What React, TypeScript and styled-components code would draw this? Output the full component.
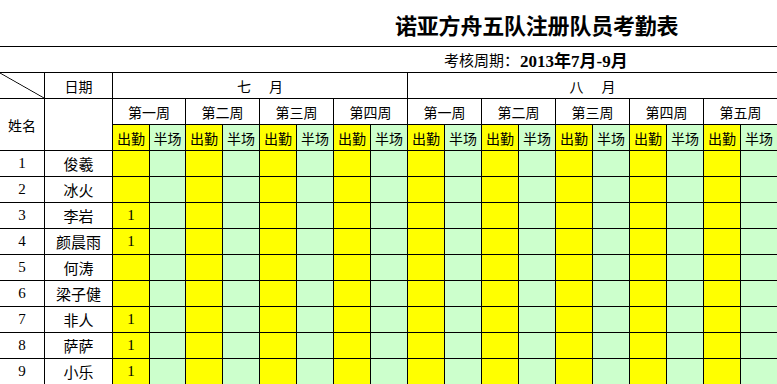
import React from 'react';
import styled, { createGlobalStyle } from 'styled-components';

const GlobalStyle = createGlobalStyle`
  html, body {
    margin: 0;
    padding: 0;
    background: #ffffff;
    overflow: hidden;
  }
  body {
    font-family: 'Noto Sans CJK SC', 'Liberation Sans', sans-serif;
    color: #000000;
  }
`;

type Member = { no: number, name: string, july1: string };

const members: Member[] = [
  { no: 1, name: '俊羲', july1: '' },
  { no: 2, name: '冰火', july1: '' },
  { no: 3, name: '李岩', july1: '1' },
  { no: 4, name: '颜晨雨', july1: '1' },
  { no: 5, name: '何涛', july1: '' },
  { no: 6, name: '梁子健', july1: '' },
  { no: 7, name: '非人', july1: '1' },
  { no: 8, name: '萨萨', july1: '1' },
  { no: 9, name: '小乐', july1: '1' },
];

const julyWeeks = ['第一周', '第二周', '第三周', '第四周'];
const augustWeeks = ['第一周', '第二周', '第三周', '第四周', '第五周'];
const allWeeks = [...julyWeeks, ...augustWeeks];

export default function App() {
  return (
    <Sheet>
      <GlobalStyle />
      <TitleRow>
        <Title>诺亚方舟五队注册队员考勤表</Title>
      </TitleRow>
      <PeriodRow>
        <PeriodLabel>考核周期：</PeriodLabel>
        <PeriodValue>2013年7月-9月</PeriodValue>
      </PeriodRow>
      <Table>
        <DiagonalCell />
        <Cell>日期</Cell>
        <Cell span={8}>
          <MonthLabel><span>七</span><span>月</span></MonthLabel>
        </Cell>
        <Cell span={10}>
          <MonthLabel><span>八</span><span>月</span></MonthLabel>
        </Cell>

        <Cell rows={2}>姓名</Cell>
        <Cell rows={2} />
        {allWeeks.map((w, i) => (
          <Cell key={'w' + i} span={2}>{w}</Cell>
        ))}
        {allWeeks.map((w, i) => (
          <React.Fragment key={'h' + i}>
            <Cell tone="yellow">出勤</Cell>
            <Cell tone="green">半场</Cell>
          </React.Fragment>
        ))}

        {members.map((m) => (
          <React.Fragment key={m.no}>
            <NumberCell>{m.no}</NumberCell>
            <NameCell>{m.name}</NameCell>
            {allWeeks.map((w, i) => (
              <React.Fragment key={i}>
                <NumberCell tone="yellow">{i === 0 ? m.july1 : ''}</NumberCell>
                <Cell tone="green" />
              </React.Fragment>
            ))}
          </React.Fragment>
        ))}
      </Table>
    </Sheet>
  );
}

const Sheet = styled.div`
  width: 778px;
  height: 384px;
  overflow: hidden;
`;

const TitleRow = styled.div`
  box-sizing: border-box;
  height: 47px;
  border-bottom: 1px solid #000000;
  display: flex;
  align-items: center;
  padding-left: 395px;
  padding-top: 2px;
`;

const Title = styled.div`
  font-size: 22px;
  font-weight: 700;
  line-height: 1;
  letter-spacing: -0.2px;
  white-space: nowrap;
`;

const PeriodRow = styled.div`
  box-sizing: border-box;
  height: 26px;
  border-bottom: 1px solid #000000;
  display: flex;
  align-items: center;
  padding-left: 444px;
  white-space: nowrap;
`;

const PeriodLabel = styled.span`
  font-size: 15px;
`;

const PeriodValue = styled.span`
  font-family: 'Liberation Serif', 'Noto Sans CJK SC', serif;
  font-size: 17px;
  font-weight: 700;
  margin-left: 1px;
`;

const Table = styled.div`
  display: grid;
  grid-template-columns: 45px 68px 37px 36px repeat(16, 37px);
  grid-auto-rows: 26px;
`;

const toneColor = (tone?: 'yellow' | 'green') =>
  tone === 'yellow' ? '#ffff00' : tone === 'green' ? '#ccffcc' : '#ffffff';

const Cell = styled.div<{ span?: number, rows?: number, tone?: 'yellow' | 'green' }>`
  box-sizing: border-box;
  grid-column: span ${(p) => p.span || 1};
  grid-row: span ${(p) => p.rows || 1};
  border-right: 1px solid #000000;
  border-bottom: 1px solid #000000;
  background: ${(p) => toneColor(p.tone)};
  display: flex;
  align-items: center;
  justify-content: center;
  font-size: 14px;
  line-height: 1;
  white-space: nowrap;
  overflow: hidden;
`;

const NameCell = styled(Cell)`
  font-size: 15px;
`;

const NumberCell = styled(Cell)`
  font-family: 'Liberation Serif', 'Noto Sans CJK SC', serif;
  font-size: 15px;
`;

const DiagonalCell = styled(Cell)`
  background: linear-gradient(
    to top right,
    #ffffff calc(50% - 0.8px),
    #000000 50%,
    #ffffff calc(50% + 0.8px)
  );
`;

const MonthLabel = styled.div`
  display: flex;
  gap: 18px;
`;
